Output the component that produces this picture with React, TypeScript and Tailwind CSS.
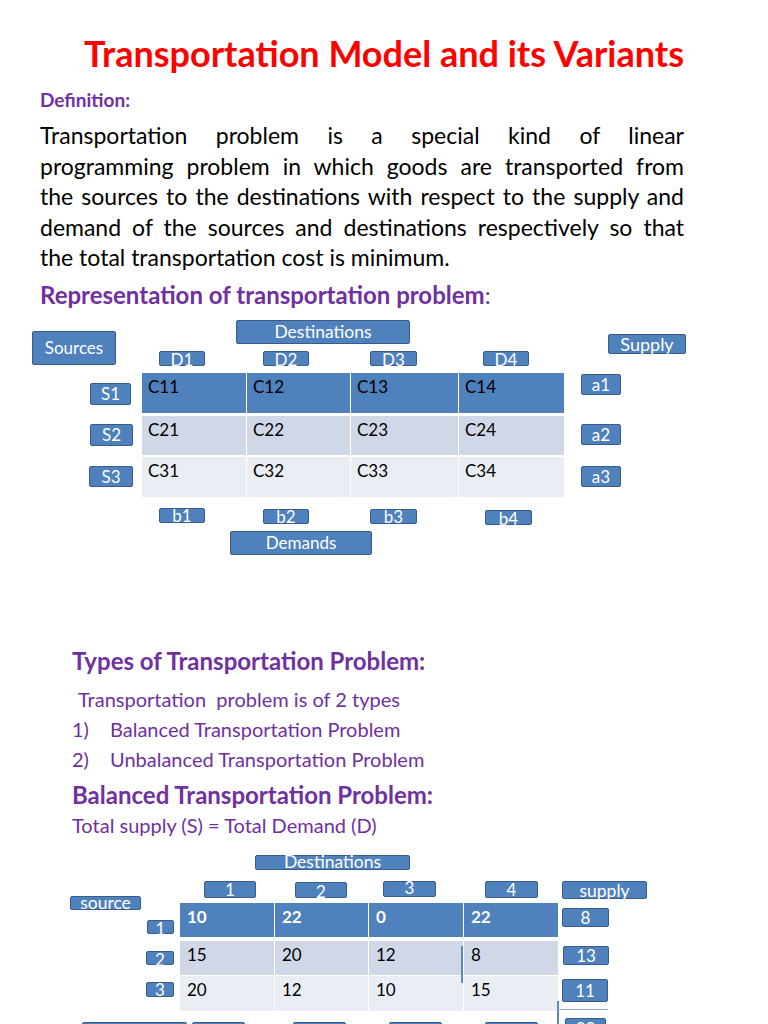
import type { ReactNode } from 'react';

function Tag({ className, children, text = 'text-[17px]' }: { className: string; children: ReactNode; text?: string }) {
  return (
    <div
      className={`absolute flex justify-center overflow-visible rounded-[2px] border-[1.5px] border-[#385d8a] bg-[#4f81bd] leading-none text-white ${text} ${className}`}>
      {children}
    </div>);
}

const PARA = [
'Transportation problem is a special kind of linear',
'programming problem in which goods are transported from',
'the sources to the destinations with respect to the supply and',
'demand of the sources and destinations respectively so that'];

const COSTS = [
['C11', 'C12', 'C13', 'C14'],
['C21', 'C22', 'C23', 'C24'],
['C31', 'C32', 'C33', 'C34']];

const BALANCED = [
['10', '22', '0', '22'],
['15', '20', '12', '8'],
['20', '12', '10', '15']];

const ROW_BG = ['bg-[#4f81bd]', 'bg-[#d0d8e8]', 'bg-[#e9edf4]'];

function CostTable() {
  return (
    <div className="ml-[142px] flex w-[422px] flex-col">
      {COSTS.map((row, r) =>
      <div
        key={r}
        className={`grid grid-cols-[104px_103px_107px_105px] gap-x-[1px] ${r === 0 ? 'h-[40px]' : r === 1 ? 'mt-[3px] h-[39px]' : 'mt-[2px] h-[40px]'}`}>
          {row.map((c) =>
        <div key={c} className={`${ROW_BG[r]} pl-[6px] pt-[4px] text-[17px] leading-[20px] text-black`}>
              {c}
            </div>
        )}
        </div>
      )}
    </div>);
}

function BalancedTable() {
  return (
    <div className="ml-[180px] flex w-[378px] flex-col">
      {BALANCED.map((row, r) =>
      <div
        key={r}
        className={`grid grid-cols-[94px_93px_94px_94px] gap-x-[1px] ${r === 0 ? 'h-[34px]' : r === 1 ? 'mt-[4px] h-[34px]' : 'mt-[1px] h-[35px]'}`}>
          {row.map((c, i) =>
        <div
          key={i}
          className={`${ROW_BG[r]} pl-[7px] pt-[4px] text-[17px] leading-[20px] ${r === 0 ? 'font-bold text-white' : 'text-black'}`}>
              {c}
            </div>
        )}
        </div>
      )}
    </div>);
}

export default function App() {
  return (
    <div className="h-[1024px] w-[768px] overflow-hidden bg-white font-['Lato',sans-serif] text-black">
      <h1 className="pt-[31px] text-center text-[36px] font-bold leading-[44px] text-[#ff0000]">
        Transportation Model and its Variants
      </h1>
      <div className="mt-[15px] pl-[40px] text-[19px] font-bold leading-[20px] text-[#7030a0]">Definition:</div>

      <div className="ml-[40px] mt-[10px] w-[644px] text-[23px] leading-[30.5px]">
        {PARA.map((l) =>
        <div key={l} className="whitespace-nowrap text-justify [text-align-last:justify]">
            {l}
          </div>
        )}
        <div className="whitespace-nowrap">the total transportation cost is minimum.</div>
      </div>

      <h2 className="mt-[8px] pl-[40px] text-[24px] leading-[28px] text-[#7030a0]">
        <span className="font-bold">Representation of transportation problem</span>:
      </h2>

      {/* first diagram: labels sit around the cost table */}
      <div className="relative h-[252px]">
        <Tag className="left-[32px] top-[22px] h-[34px] w-[84px] items-center">Sources</Tag>
        <Tag className="left-[236px] top-[11px] h-[24px] w-[174px] items-center" text="text-[17.5px]">Destinations</Tag>
        <Tag className="left-[608px] top-[25px] h-[20px] w-[78px] items-center" text="text-[18px]">Supply</Tag>
        <Tag className="left-[159px] top-[42px] h-[15px] w-[46px] items-center pt-[3px]">D1</Tag>
        <Tag className="left-[263px] top-[42px] h-[15px] w-[46px] items-center pt-[3px]">D2</Tag>
        <Tag className="left-[370px] top-[42px] h-[15px] w-[47px] items-center pt-[3px]">D3</Tag>
        <Tag className="left-[483px] top-[42px] h-[15px] w-[46px] items-center pt-[3px]">D4</Tag>
        <Tag className="left-[90px] top-[74px] h-[22px] w-[41px] items-center">S1</Tag>
        <Tag className="left-[90px] top-[115px] h-[22px] w-[43px] items-center">S2</Tag>
        <Tag className="left-[89px] top-[157px] h-[21px] w-[44px] items-center">S3</Tag>
        <Tag className="left-[581px] top-[65px] h-[21px] w-[40px] items-center">a1</Tag>
        <Tag className="left-[581px] top-[115px] h-[21px] w-[40px] items-center">a2</Tag>
        <Tag className="left-[581px] top-[157px] h-[21px] w-[40px] items-center">a3</Tag>
        <Tag className="left-[159px] top-[199px] h-[15px] w-[46px] items-center">b1</Tag>
        <Tag className="left-[263px] top-[200px] h-[15px] w-[46px] items-center">b2</Tag>
        <Tag className="left-[370px] top-[200px] h-[15px] w-[47px] items-center">b3</Tag>
        <Tag className="left-[485px] top-[201px] h-[15px] w-[47px] items-center pt-[3px]">b4</Tag>
        <Tag className="left-[230px] top-[222px] h-[24px] w-[142px] items-center">Demands</Tag>
        <div className="pt-[64px]">
          <CostTable />
        </div>
      </div>

      <div className="mt-[85px] pl-[72px] text-[#7030a0]">
        <h2 className="text-[24px] font-bold leading-[30px]">Types of Transportation Problem:</h2>
        <p className="mt-[8px] pl-[6px] text-[20px] leading-[30px]">Transportation&nbsp; problem is of 2 types</p>
        <ol className="text-[20px] leading-[30.5px]">
          <li className="flex">
            <span className="w-[38px]">1)</span>Balanced Transportation Problem
          </li>
          <li className="flex">
            <span className="w-[38px]">2)</span>Unbalanced Transportation Problem
          </li>
        </ol>
        <h2 className="mt-[5px] text-[24px] font-bold leading-[30px]">Balanced Transportation Problem:</h2>
        <p className="mt-[1px] text-[20px] leading-[28px]">Total supply (S) = Total Demand (D)</p>
      </div>

      {/* second diagram */}
      <div className="relative mt-[6px] h-[200px]">
        <Tag className="left-[255px] top-[10px] h-[15px] w-[155px] items-center" text="text-[17.5px]">Destinations</Tag>
        <Tag className="left-[204px] top-[36px] h-[17px] w-[52px] items-center">1</Tag>
        <Tag className="left-[295px] top-[37px] h-[16px] w-[52px] items-center pt-[3px]">2</Tag>
        <Tag className="left-[383px] top-[36px] h-[16px] w-[53px] items-center pb-[3px]">3</Tag>
        <Tag className="left-[485px] top-[36px] h-[17px] w-[53px] items-center">4</Tag>
        <Tag className="left-[562px] top-[36px] h-[18px] w-[85px] items-center pt-[2px]" text="text-[17.5px]">supply</Tag>
        <Tag className="left-[70px] top-[51px] h-[14px] w-[71px] items-center" text="text-[17.5px]">source</Tag>
        <Tag className="left-[147px] top-[75px] h-[14px] w-[27px] items-center pt-[4px]">1</Tag>
        <Tag className="left-[146px] top-[106px] h-[14px] w-[28px] items-center pt-[3px]">2</Tag>
        <Tag className="left-[146px] top-[137px] h-[15px] w-[28px] items-center">3</Tag>
        <Tag className="left-[562px] top-[63px] h-[19px] w-[47px] items-center">8</Tag>
        <Tag className="left-[563px] top-[101px] h-[19px] w-[46px] items-center">13</Tag>
        <Tag className="left-[562px] top-[134px] h-[23px] w-[46px] items-center">11</Tag>
        <Tag className="left-[565px] top-[173px] h-[20px] w-[41px] items-start pt-[1px]">32</Tag>
        <Tag className="left-[82px] top-[177px] h-[20px] w-[105px] items-start pt-[1px]">Demands</Tag>
        <Tag className="left-[192px] top-[177px] h-[20px] w-[53px] items-start pt-[1px]">5</Tag>
        <Tag className="left-[293px] top-[177px] h-[20px] w-[53px] items-start pt-[1px]">11</Tag>
        <Tag className="left-[389px] top-[177px] h-[20px] w-[53px] items-start pt-[1px]">8</Tag>
        <Tag className="left-[485px] top-[177px] h-[20px] w-[53px] items-start pt-[1px]">8</Tag>
        <div className="absolute left-[461px] top-[101px] h-[37px] w-[1.5px] bg-[#5b87c2]" />
        <div className="absolute left-[557px] top-[156px] h-[44px] w-[1.5px] bg-[#5b87c2]" />
        <div className="absolute left-[557px] top-[164px] h-[1.5px] w-[51px] bg-[#8eaed8]" />
        <div className="pt-[58px]">
          <BalancedTable />
        </div>
      </div>
    </div>);
}
